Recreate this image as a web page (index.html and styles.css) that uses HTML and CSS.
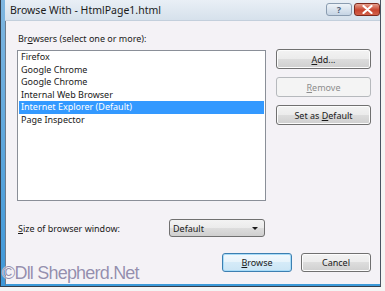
FILE: index.html
```html
<!DOCTYPE html>
<html lang="en">
<head>
    <meta charset="UTF-8">
    <title>Browse With - HtmlPage1.html</title>
    <link rel="stylesheet" href="styles.css">
</head>
<body>

    <!-- Dialog window -->
    <div class="window">
        <div class="titlebar">
            <span class="title">Browse With - HtmlPage1.html</span>
            <div class="caption-buttons">
                <span class="cap-btn help">?</span>
                <span class="cap-btn close">
                    <svg width="11" height="9" viewBox="0 0 11 9">
                        <path d="M1.5 1 L9.5 8 M9.5 1 L1.5 8" stroke="#fff" stroke-width="2.2" stroke-linecap="round"/>
                    </svg>
                </span>
            </div>
        </div>

        <div class="client">
            <div class="label">Br<u>o</u>wsers (select one or more):</div>

            <div class="browsers-row">
                <ul class="listbox">
                    <li>Firefox</li>
                    <li>Google Chrome</li>
                    <li>Google Chrome</li>
                    <li>Internal Web Browser</li>
                    <li class="selected">Internet Explorer (Default)</li>
                    <li>Page Inspector</li>
                </ul>
                <div class="side-buttons">
                    <button class="btn"><u>A</u>dd...</button>
                    <button class="btn" disabled><u>R</u>emove</button>
                    <button class="btn">Set as <u>D</u>efault</button>
                </div>
            </div>

            <div class="size-row">
                <span class="label"><u>S</u>ize of browser window:</span>
                <div class="dropdown">
                    <span>Default</span>
                    <span class="arrow"></span>
                </div>
            </div>

            <div class="actions">
                <button class="btn action focused"><u>B</u>rowse</button>
                <button class="btn action">Cancel</button>
            </div>
        </div>
    </div>

    <!-- Watermark over the screenshot -->
    <div class="watermark">&copy;Dll Shepherd.Net</div>

</body>
</html>
```

FILE: styles.css
```css
body {
    margin: 0;
    background-color: #f4f4f4;
    font-family: 'Noto Sans', 'Liberation Sans', sans-serif;
    font-size: 9px;
    color: #1a1a1a;
}

.window {
    width: 379px;
    height: 286px;
    display: flex;
    flex-direction: column;
    background: linear-gradient(#7fb6e0, #3d97d8);
    border: 1px solid #333e4c;
    border-top: none;
    border-right-color: #4a5462;
    position: relative;
}

.titlebar {
    height: 20px;
    display: flex;
    align-items: flex-start;
    justify-content: space-between;
    background: linear-gradient(#e9eff6, #d6e1ec);
    border-bottom: 1px solid #c3cfdc;
    margin-left: 4px;
}

.title {
    font-size: 10.5px;
    color: #1b1b1b;
    padding: 3px 0 0 5px;
}

.caption-buttons {
    display: flex;
    gap: 2px;
    padding-top: 3px;
}

.cap-btn {
    height: 13px;
    border-radius: 3px;
    display: flex;
    align-items: center;
    justify-content: center;
    box-sizing: border-box;
}

.help {
    width: 26px;
    background: linear-gradient(#eef3f8, #c5d4e4);
    border: 1px solid #8a9cb0;
    color: #50627a;
    font-size: 9px;
    font-weight: bold;
}

.close {
    width: 26px;
    background: linear-gradient(#e7a18f, #c8452f 55%, #d2614a);
    border: 1px solid #7c2a1e;
}

.client {
    flex: 1;
    margin-left: 4px;
    background-color: #f4f2f6;
    border-left: 1px solid #6f7b8a;
    border-bottom: 2px solid #3c9ad9;
    padding: 11px 8px 0 11px;
}

.label {
    line-height: 13px;
    padding-left: 1px;
}

.browsers-row {
    display: flex;
    align-items: flex-start;
    margin-top: 5px;
}

.listbox {
    list-style: none;
    margin: 0;
    padding: 0;
    width: 247px;
    height: 149px;
    background-color: #fff;
    border: 1px solid #8a8f98;
}

.listbox li {
    line-height: 12.6px;
    height: 12.6px;
    padding-left: 2px;
    margin: 0 1px;
}

.listbox .selected {
    background-color: #3399ff;
    color: #fff;
}

.side-buttons {
    display: flex;
    flex-direction: column;
    gap: 8px;
    margin-left: 10px;
    margin-top: -1px;
}

.btn {
    font-family: inherit;
    font-size: 9px;
    color: #1a1a1a;
    width: 95px;
    height: 20px;
    padding: 0;
    border: 1px solid #707070;
    border-radius: 3px;
    background: linear-gradient(#f3f3f3, #ebebeb 50%, #dddddd 50%, #cfcfcf);
    box-shadow: inset 0 0 0 1px #fcfcfc;
}

.btn:disabled {
    color: #8d8d8d;
    border-color: #b6b9bd;
    background: #f4f4f4;
    box-shadow: none;
}

.size-row {
    display: flex;
    align-items: center;
    margin-top: 18px;
}

.size-row .label {
    width: 151px;
}

.dropdown {
    width: 96px;
    height: 18px;
    box-sizing: border-box;
    display: flex;
    align-items: center;
    justify-content: space-between;
    padding: 0 6px 0 3px;
    border: 1px solid #707070;
    border-radius: 3px;
    background: linear-gradient(#f3f3f3, #ebebeb 50%, #dddddd 50%, #cfcfcf);
}

.arrow {
    width: 0;
    height: 0;
    border-left: 3px solid transparent;
    border-right: 3px solid transparent;
    border-top: 3px solid #1a1a1a;
}

.actions {
    display: flex;
    justify-content: flex-end;
    gap: 9px;
    margin-top: 16px;
    padding-right: 1px;
}

.action {
    width: 70px;
    height: 19px;
}

.focused {
    border-color: #3c7fb1;
    box-shadow: inset 0 0 0 1px #a8dcf8;
    background: linear-gradient(#f2f9fd, #e6f3fb 50%, #d5ebf8 50%, #cbe5f5);
}

.watermark {
    position: absolute;
    left: 2px;
    top: 263px;
    font-family: 'Liberation Sans', Arial, sans-serif;
    font-size: 18px;
    letter-spacing: -0.8px;
    color: #958fae;
    text-shadow: 0 0 1px #fff, 0 0 1px #fff;
}
```
